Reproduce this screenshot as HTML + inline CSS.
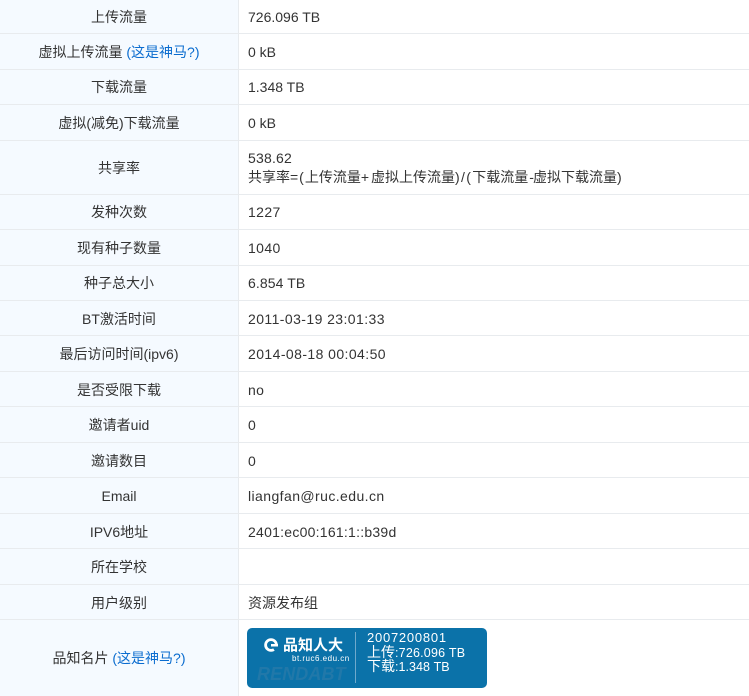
<!DOCTYPE html>
<html><head><meta charset="utf-8">
<style>
html,body{margin:0;padding:0;background:#fff;width:749px;height:696px;overflow:hidden}
body{position:relative;font:14px/18px "Liberation Sans","Noto Sans CJK SC",sans-serif;color:#333}
#bg{position:absolute;left:0;top:0;width:238px;height:696px;background:#f5faff}
#v{position:absolute;left:238px;top:0;width:1px;height:696px;background:#e8ebee}
.h{position:absolute;left:0;width:749px;height:1px;background:#e8ebee}
.l{position:absolute;left:0;width:238px;text-align:center;white-space:nowrap}
.r{position:absolute;left:248px;white-space:nowrap}
a{color:#0a6ccf;text-decoration:none}
#card{position:absolute;left:247px;top:628px;width:240px;height:60px;background:#0b72a9;border-radius:5px;overflow:hidden;color:#fff}
#card div{position:absolute;white-space:nowrap}
#card i{font-style:normal;font-size:14px;letter-spacing:0}
</style></head><body>
<div id="bg"></div>
<div class="h" style="top:33px"></div><div class="h" style="top:69px"></div><div class="h" style="top:104px"></div><div class="h" style="top:140px"></div><div class="h" style="top:194px"></div><div class="h" style="top:229px"></div><div class="h" style="top:265px"></div><div class="h" style="top:300px"></div><div class="h" style="top:335px"></div><div class="h" style="top:371px"></div><div class="h" style="top:406px"></div><div class="h" style="top:442px"></div><div class="h" style="top:477px"></div><div class="h" style="top:513px"></div><div class="h" style="top:548px"></div><div class="h" style="top:584px"></div><div class="h" style="top:619px"></div>
<div id="v"></div>

<div class="l" style="top:8px">上传流量</div><div class="r" style="top:8px">726.096 TB</div>
<div class="l" style="top:43px">虚拟上传流量 <a>(这是神马?)</a></div><div class="r" style="top:43px">0 kB</div>
<div class="l" style="top:78px">下载流量</div><div class="r" style="top:78px">1.348 TB</div>
<div class="l" style="top:114px">虚拟(减免)下载流量</div><div class="r" style="top:114px">0 kB</div>
<div class="l" style="top:159px">共享率</div><div class="r" style="top:149px;letter-spacing:.2px">538.62</div>
<div class="r" style="top:168px">共享率<span style="letter-spacing:1px">=(</span>上传流量<span style="letter-spacing:2px">+</span>虚拟上传流量<span style="letter-spacing:1.35px">)/(</span>下载流量<span style="letter-spacing:-1px;margin-left:1px">-</span>虚拟下载流量)</div>
<div class="l" style="top:203px">发种次数</div><div class="r" style="top:203px;letter-spacing:.4px">1227</div>
<div class="l" style="top:239px">现有种子数量</div><div class="r" style="top:239px;letter-spacing:.4px">1040</div>
<div class="l" style="top:274px">种子总大小</div><div class="r" style="top:274px;letter-spacing:.1px">6.854 TB</div>
<div class="l" style="top:310px">BT激活时间</div><div class="r" style="top:310px;letter-spacing:.42px">2011-03-19 23:01:33</div>
<div class="l" style="top:345px">最后访问时间(ipv6)</div><div class="r" style="top:345px;letter-spacing:.42px">2014-08-18 00:04:50</div>
<div class="l" style="top:381px">是否受限下载</div><div class="r" style="top:381px;letter-spacing:.4px">no</div>
<div class="l" style="top:416px">邀请者uid</div><div class="r" style="top:416px">0</div>
<div class="l" style="top:452px">邀请数目</div><div class="r" style="top:452px">0</div>
<div class="l" style="top:487px">Email</div><div class="r" style="top:487px;letter-spacing:.42px">liangfan@ruc.edu.cn</div>
<div class="l" style="top:523px">IPV6地址</div><div class="r" style="top:523px;letter-spacing:.25px">2401:ec00:161:1::b39d</div>
<div class="l" style="top:558px">所在学校</div>
<div class="l" style="top:594px">用户级别</div><div class="r" style="top:594px">资源发布组</div>
<div class="l" style="top:649px">品知名片 <a>(这是神马?)</a></div>

<div id="card">
<svg style="position:absolute;left:17px;top:10px" width="14" height="14" viewBox="0 0 14 14"><circle cx="7" cy="7" r="5.4" fill="none" stroke="#fff" stroke-width="2.8"/><path d="M8 8.5L14 8.5L14 12.5L10.5 12.5Z" fill="#0b72a9"/><rect x="7" y="6" width="7" height="2.5" fill="#fff"/></svg>
<div style="left:36px;top:9px;font-size:15px;line-height:18px;font-weight:bold">品知人大</div>
<div style="left:45px;top:25px;font-size:8px;line-height:12px;letter-spacing:.5px">bt.ruc6.edu.cn</div>
<div style="left:10px;top:36px;font:italic bold 18px/21px 'Liberation Sans',sans-serif;color:#2178a9;letter-spacing:.1px">RENDABT</div>
<div style="left:108px;top:4px;width:1px;height:51px;background:#6fa9cc"></div>
<div style="left:120px;top:3px;font-size:13px;line-height:14px;letter-spacing:.75px">2007200801</div>
<div style="left:120px;top:17px;font-size:12.5px;line-height:14px;letter-spacing:.2px"><i>上传</i>:726.096 TB</div>
<div style="left:120px;top:31px;font-size:12.5px;line-height:14px;letter-spacing:.05px"><i>下载</i>:1.348 TB</div>
</div>
</body></html>
